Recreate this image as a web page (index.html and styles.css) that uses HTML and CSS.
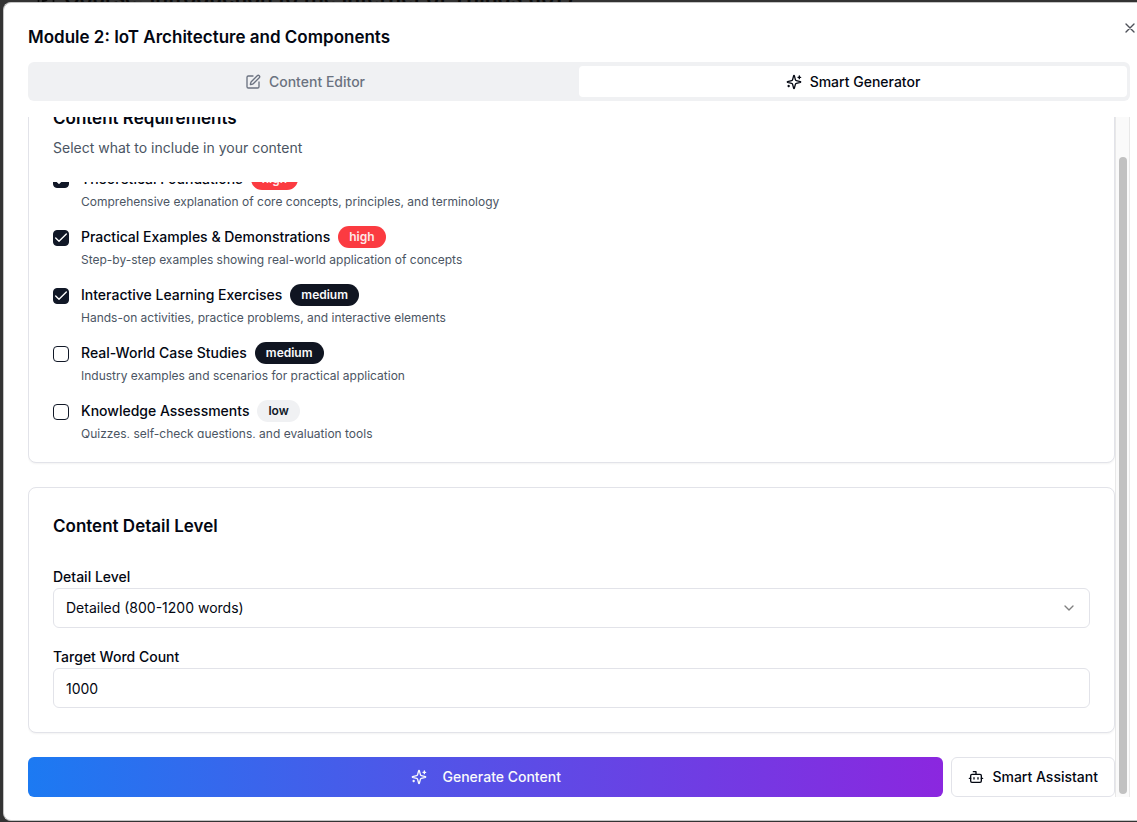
FILE: index.html
```html
<!DOCTYPE html>
<html lang="en">
<head>
<meta charset="utf-8">
<meta name="viewport" content="width=device-width, initial-scale=1">
<title>Module 2: IoT Architecture and Components</title>
<link rel="stylesheet" href="styles.css">
</head>
<body>
<svg class="sprite" aria-hidden="true">
  <symbol id="sparkles" viewBox="0 0 24 24">
    <path d="M9.937 15.5A2 2 0 0 0 8.5 14.063l-6.135-1.582a.5.5 0 0 1 0-.962L8.5 9.936A2 2 0 0 0 9.937 8.5l1.582-6.135a.5.5 0 0 1 .963 0L14.063 8.5A2 2 0 0 0 15.5 9.937l6.135 1.581a.5.5 0 0 1 0 .964L15.5 14.063a2 2 0 0 0-1.437 1.437l-1.582 6.135a.5.5 0 0 1-.963 0z"/>
    <path d="M20 3v4M22 5h-4M4 17v2M5 18H3"/>
  </symbol>
</svg>
<div class="backdrop">
  <div class="page-title" aria-hidden="true">
    <svg class="icon" viewBox="0 0 24 24"><path d="M12 3H5a2 2 0 0 0-2 2v14a2 2 0 0 0 2 2h14a2 2 0 0 0 2-2v-7M18.4 2.6a2.1 2.1 0 0 1 3 3L12 15l-4 1 1-4z"/></svg>
    <span>Course: Introduction to the Internet of Things (IoT)</span>
  </div>
  <main class="dialog" role="dialog" aria-labelledby="dialog-title">
    <button class="close" type="button" aria-label="Close">
      <svg class="icon" viewBox="0 0 24 24"><path d="M18 6 6 18M6 6l12 12"/></svg>
    </button>
    <h1 class="dialog-title" id="dialog-title">Module 2: IoT Architecture and Components</h1>
    <div class="tabs" role="tablist">
      <button class="tab" type="button" role="tab" aria-selected="false">
        <svg class="icon" viewBox="0 0 24 24"><path d="M12 3H5a2 2 0 0 0-2 2v14a2 2 0 0 0 2 2h14a2 2 0 0 0 2-2v-7"/><path d="M18.375 2.625a1 1 0 0 1 3 3l-9.013 9.014a2 2 0 0 1-.853.505l-2.873.84a.5.5 0 0 1-.62-.62l.84-2.873a2 2 0 0 1 .506-.852z"/></svg>
        Content Editor
      </button>
      <button class="tab active" type="button" role="tab" aria-selected="true">
        <svg class="icon"><use href="#sparkles"/></svg>
        Smart Generator
      </button>
    </div>
    <div class="scroll-area">
      <div class="viewport">
        <section class="card">
          <h2 class="card-title">Content Requirements</h2>
          <p class="card-note">Select what to include in your content</p>
          <div class="option-window">
            <ul class="options">
              <li class="option">
                <input class="check" type="checkbox" id="theory" checked>
                <div>
                  <div class="option-head"><label for="theory">Theoretical Foundations</label><span class="badge high">high</span></div>
                  <p class="option-note">Comprehensive explanation of core concepts, principles, and terminology</p>
                </div>
              </li>
              <li class="option">
                <input class="check" type="checkbox" id="practical" checked>
                <div>
                  <div class="option-head"><label for="practical">Practical Examples &amp; Demonstrations</label><span class="badge high">high</span></div>
                  <p class="option-note">Step-by-step examples showing real-world application of concepts</p>
                </div>
              </li>
              <li class="option">
                <input class="check" type="checkbox" id="interactive" checked>
                <div>
                  <div class="option-head"><label for="interactive">Interactive Learning Exercises</label><span class="badge medium">medium</span></div>
                  <p class="option-note">Hands-on activities, practice problems, and interactive elements</p>
                </div>
              </li>
              <li class="option">
                <input class="check" type="checkbox" id="cases">
                <div>
                  <div class="option-head"><label for="cases">Real-World Case Studies</label><span class="badge medium">medium</span></div>
                  <p class="option-note">Industry examples and scenarios for practical application</p>
                </div>
              </li>
              <li class="option">
                <input class="check" type="checkbox" id="assessments">
                <div>
                  <div class="option-head"><label for="assessments">Knowledge Assessments</label><span class="badge low">low</span></div>
                  <p class="option-note">Quizzes, self-check questions, and evaluation tools</p>
                </div>
              </li>
            </ul>
          </div>
        </section>
        <section class="card">
          <h2 class="card-title">Content Detail Level</h2>
          <div class="fields">
            <div class="field">
              <label for="detail">Detail Level</label>
              <select class="control select" id="detail"><option>Detailed (800-1200 words)</option></select>
            </div>
            <div class="field">
              <label for="count">Target Word Count</label>
              <input class="control" id="count" type="text" inputmode="numeric" value="1000">
            </div>
          </div>
        </section>
        <div class="actions">
          <button class="button generate" type="button">
            <svg class="icon"><use href="#sparkles"/></svg>
            Generate Content
          </button>
          <button class="button assistant" type="button">
            <svg class="icon" viewBox="0 0 24 24"><path d="M12 8V4H8"/><rect width="16" height="12" x="4" y="8" rx="2"/><path d="M2 14h2M20 14h2M15 13v2M9 13v2"/></svg>
            Smart Assistant
          </button>
        </div>
      </div>
      <div class="scrollbar" aria-hidden="true"><div class="thumb"></div></div>
    </div>
  </main>
</div>
</body>
</html>
```
FILE: styles.css
```css
* {
  box-sizing: border-box;
}

body {
  margin: 0;
  font: 14px/20px Inter, "Liberation Sans", sans-serif;
  color: #030712;
}

h1, h2, p, ul {
  margin: 0;
  padding: 0;
}

button, input, select {
  margin: 0;
  font: inherit;
  color: inherit;
}

.sprite {
  position: absolute;
  width: 0;
  height: 0;
}

.icon {
  flex: none;
  width: 16px;
  height: 16px;
  fill: none;
  stroke: currentColor;
  stroke-width: 2;
  stroke-linecap: round;
  stroke-linejoin: round;
}

.backdrop {
  position: relative;
  display: flex;
  height: 100vh;
  padding: 2px 0 1px 3px;
  overflow: hidden;
  background: #333;
}

.page-title {
  position: absolute;
  top: -16px;
  left: 36px;
  display: flex;
  align-items: center;
  gap: 8px;
  font-size: 21px;
  line-height: 28px;
  font-weight: 600;
  color: #0a0a0a;
  white-space: nowrap;
}

.page-title .icon {
  width: 20px;
  height: 20px;
}

.dialog {
  position: relative;
  display: flex;
  flex: 1;
  flex-direction: column;
  gap: 16px;
  min-width: 0;
  padding: 26px 7px 23px 24px;
  border: 1px solid #c4c4c4;
  border-right: 0;
  border-radius: 8px 0 0 8px;
  background: #fff;
}

.close {
  position: absolute;
  top: 17px;
  right: -1px;
  display: flex;
  padding: 0;
  border: 0;
  background: none;
  opacity: 0.7;
}

.dialog-title {
  font-size: 17px;
  line-height: 17px;
  font-weight: 600;
}

.tabs {
  display: grid;
  grid-template-columns: 1fr 1fr;
  padding: 4px 3px;
  border-radius: 6px;
  background: #f0f1f3;
}

.tab {
  display: flex;
  align-items: center;
  justify-content: center;
  gap: 8px;
  height: 31px;
  padding: 0;
  border: 0;
  border-radius: 4px;
  background: none;
  color: #6b7280;
  font-weight: 500;
}

.tab.active {
  background: #fff;
  color: #030712;
}

.scroll-area {
  display: flex;
  flex: 1;
  min-height: 0;
}

.viewport {
  display: flex;
  flex: 1;
  flex-direction: column;
  justify-content: flex-end;
  gap: 24px;
  min-width: 0;
  overflow: hidden;
}

.scrollbar {
  display: flex;
  flex: none;
  width: 15px;
  padding: 40px 2px 3px 3px;
  border: 1px solid #e8e8e8;
  border-width: 0 1px;
  background: #fafafa;
}

.thumb {
  flex: 1;
  border-radius: 4px;
  background: #c1c1c1;
}

.card {
  flex: none;
  padding: 24px;
  border: 1px solid #e2e3e9;
  border-radius: 8px;
  background: #fff;
  box-shadow: 0 1px 2px rgba(0, 0, 0, 0.05);
}

.card-title {
  font-size: 17px;
  line-height: 28px;
  font-weight: 600;
}

.card-note {
  margin-top: 6px;
  color: #4b5563;
}

.option-window {
  height: 256px;
  margin-top: 24px;
  overflow: hidden;
}

.options {
  display: grid;
  gap: 16px;
  margin-top: -14px;
  list-style: none;
}

.option {
  display: flex;
  gap: 12px;
}

.check {
  flex: none;
  appearance: none;
  width: 16px;
  height: 16px;
  margin-top: 4px;
  border: 1px solid #111827;
  border-radius: 4px;
  background: #fff;
}

.check:checked {
  background: #111827 url("data:image/svg+xml,%3Csvg xmlns='http://www.w3.org/2000/svg' viewBox='0 0 24 24' fill='none' stroke='white' stroke-width='2' stroke-linecap='round' stroke-linejoin='round'%3E%3Cpath d='M20 6 9 17l-5-5'/%3E%3C/svg%3E") center / 16px 16px no-repeat;
}

.option-head {
  display: flex;
  align-items: center;
  gap: 8px;
  font-weight: 500;
}

.badge {
  padding: 3px 11px;
  border-radius: 11px;
  font-size: 12px;
  line-height: 16px;
  font-weight: 600;
}

.high {
  background: #fb3b41;
  color: #fee8e8;
}

.medium {
  background: #101521;
  color: #f9fafb;
}

.low {
  background: #f0f1f3;
  color: #111827;
}

.option-note {
  margin-top: 4px;
  font-size: 12px;
  line-height: 16px;
  color: #4b5563;
}

.fields {
  display: grid;
  gap: 16px;
  margin-top: 24px;
}

.field {
  display: grid;
}

.field label {
  padding-top: 2px;
  line-height: 22px;
  font-weight: 500;
}

.control {
  width: 100%;
  height: 40px;
  padding: 0 12px;
  border: 1px solid #e2e3e9;
  border-radius: 6px;
  background: #fff;
}

.select {
  appearance: none;
  background: #fff url("data:image/svg+xml,%3Csvg xmlns='http://www.w3.org/2000/svg' viewBox='0 0 24 24' fill='none' stroke='%23808080' stroke-width='2' stroke-linecap='round' stroke-linejoin='round'%3E%3Cpath d='m6 9 6 6 6-6'/%3E%3C/svg%3E") right 12px center / 16px 16px no-repeat;
}

.actions {
  display: flex;
  flex: none;
  gap: 8px;
}

.button {
  display: flex;
  align-items: center;
  justify-content: center;
  height: 40px;
  padding: 0 16px;
  border: 0;
  border-radius: 6px;
  font-weight: 500;
}

.generate {
  flex: 1;
  gap: 16px;
  background: linear-gradient(to right, #1c7af2, #4f56e8 42%, #8b27df);
  color: #f9fafb;
}

.assistant {
  gap: 8px;
  border: 1px solid #e2e3e9;
  background: #fff;
}
```
